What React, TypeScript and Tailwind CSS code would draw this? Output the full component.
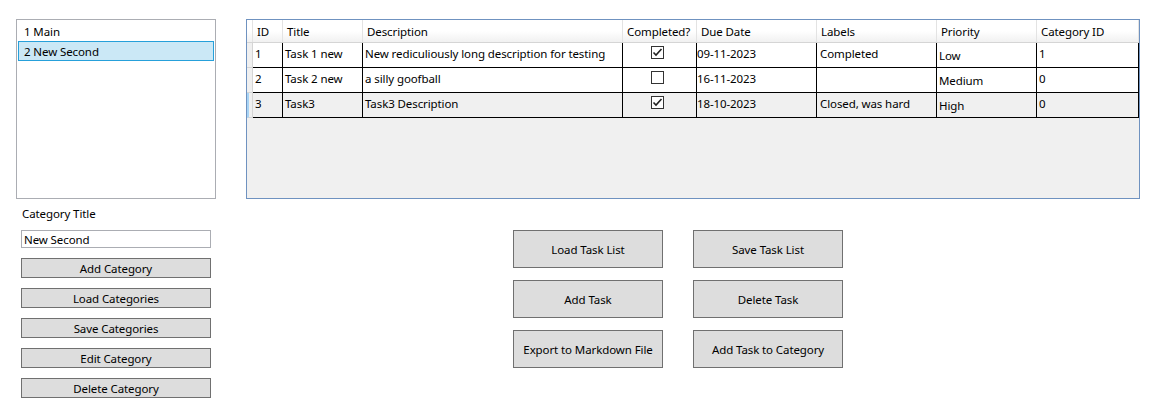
const columns = [
  { key: "id", title: "ID", w: "w-[30px]" },
  { key: "title", title: "Title", w: "w-[80px]" },
  { key: "desc", title: "Description", w: "w-[260px]" },
  { key: "done", title: "Completed?", w: "w-[74px]" },
  { key: "due", title: "Due Date", w: "w-[120px]" },
  { key: "labels", title: "Labels", w: "w-[120px]" },
  { key: "prio", title: "Priority", w: "w-[100px]" },
  { key: "cat", title: "Category ID", w: "w-[102px]" },
];

const tasks = [
  { id: "1", title: "Task 1 new", desc: "New rediculiously long description for testing", done: true, due: "09-11-2023", labels: "Completed", prio: "Low", cat: "1" },
  { id: "2", title: "Task 2 new", desc: "a silly goofball", done: false, due: "16-11-2023", labels: "", prio: "Medium", cat: "0" },
  { id: "3", title: "Task3", desc: "Task3 Description", done: true, due: "18-10-2023", labels: "Closed, was hard", prio: "High", cat: "0" },
];

const categoryButtons = ["Add Category", "Load Categories", "Save Categories", "Edit Category", "Delete Category"];

const taskButtons = [
  ["Load Task List", "Save Task List"],
  ["Add Task", "Delete Task"],
  ["Export to Markdown File", "Add Task to Category"],
];

function CheckBox({ checked }: { checked: boolean }) {
  return (
    <div className="w-[13px] h-[13px] border border-[#333333] bg-white flex items-center justify-center">
      {checked && (
        <svg width="11" height="11" viewBox="0 0 11 11">
          <path d="M1.5 5.5 L4 8 L9.5 2" fill="none" stroke="#222" strokeWidth="1.6" />
        </svg>
      )}
    </div>
  );
}

export default function App() {
  return (
    <div className="w-[1153px] h-[420px] bg-white flex pt-[19px] text-[11.5px] tracking-[-0.1px] text-[#000] font-['Noto_Sans',sans-serif] leading-[16px]">
      {/* left column: categories */}
      <div className="ml-[16px] w-[200px] flex flex-col">
        <div className="h-[180px] border border-[#abadb3] p-[1px] flex flex-col">
          <div className="h-[20px] border border-transparent pl-[5px] pt-[2px] flex items-center">1 Main</div>
          <div className="h-[20px] border border-[#26a0da] bg-[#cbe8f6] pl-[5px] pt-[2px] flex items-center">2 New Second</div>
        </div>
        <div className="mt-[7px] ml-[6px] h-[16px]">Category Title</div>
        <div className="mt-[8px] ml-[5px] w-[190px] h-[18px] border border-[#abadb3] pl-[2px] pt-[1px] flex items-center">New Second</div>
        <div className="ml-[5px] flex flex-col">
          {categoryButtons.map((b) => (
            <div key={b} className="mt-[10px] w-[190px] h-[20px] border border-[#707070] bg-[#dddddd] pt-[2px] flex items-center justify-center">
              {b}
            </div>
          ))}
        </div>
      </div>

      {/* right column: tasks */}
      <div className="ml-[30px] w-[894px] flex flex-col">
        <div className="h-[180px] border border-[#6f92c0] bg-[#f0f0f0] flex flex-col">
          <div className="h-[23px] flex bg-gradient-to-b from-white via-white to-[#f1f1f1] border-b border-[#d5d5d5]">
            <div className="w-[6px] border-r border-[#e3e3e3]" />
            {columns.map((c) => (
              <div key={c.key} className={`${c.w} pl-[4px] pt-[2px] border-r border-[#e3e3e3] flex items-center`}>
                {c.title}
              </div>
            ))}
          </div>
          {tasks.map((t, i) => (
            <div key={t.id} className={`h-[25px] flex ${i === 2 ? "bg-[#f0f0f0]" : "bg-white"}`}>
              <div className={`w-[6px] border-r border-b border-[#d5d5d5] bg-[#f0f0f0] ${i === 2 ? "border-l-2 border-l-[#a8d4f5]" : ""}`} />
              <div className="w-[30px] border-r border-b border-black pl-[2px] pt-[3px]">{t.id}</div>
              <div className="w-[80px] border-r border-b border-black pl-[2px] pt-[3px]">{t.title}</div>
              <div className="w-[260px] border-r border-b border-black pl-[2px] pt-[3px] whitespace-nowrap overflow-hidden">{t.desc}</div>
              <div className="w-[74px] border-r border-b border-black pt-[3px] pl-[28px]">
                <CheckBox checked={t.done} />
              </div>
              <div className="w-[120px] border-r border-b border-black pl-[0px] pt-[3px]">{t.due}</div>
              <div className="w-[120px] border-r border-b border-black pl-[3px] pt-[3px]">{t.labels}</div>
              <div className="w-[100px] border-r border-b border-black pl-[2px] pt-[5px]">{t.prio}</div>
              <div className="w-[102px] border-r border-b border-black pl-[2px] pt-[3px]">{t.cat}</div>
            </div>
          ))}
        </div>

        <div className="mt-[31px] ml-[267px] flex flex-col gap-[12px]">
          {taskButtons.map((row) => (
            <div key={row[0]} className="flex gap-[30px]">
              {row.map((b) => (
                <div key={b} className="w-[150px] h-[38px] border border-[#707070] bg-[#dddddd] pt-[2px] flex items-center justify-center">
                  {b}
                </div>
              ))}
            </div>
          ))}
        </div>
      </div>
    </div>
  );
}
